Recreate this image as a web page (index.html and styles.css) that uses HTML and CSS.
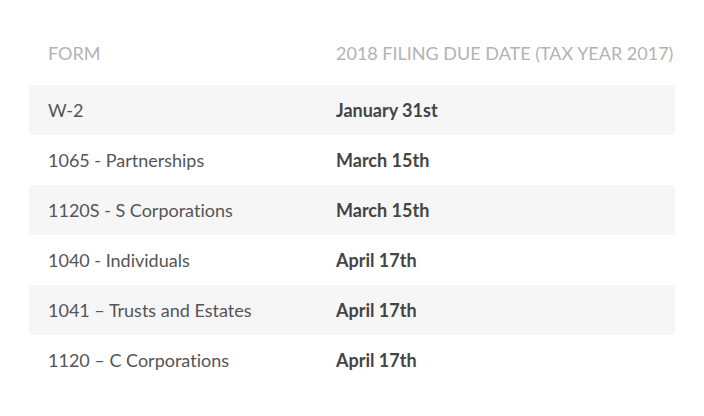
FILE: index.html
```html
<!DOCTYPE html>
<html>
<head>
<meta charset="utf-8">
<link rel="stylesheet" href="styles.css">
</head>
<body>
<div class="table">
  <div class="row head">
    <div class="cell">Form</div>
    <div class="cell">2018 Filing Due Date (Tax Year 2017)</div>
  </div>
  <div class="row alt">
    <div class="cell">W-2</div>
    <div class="cell date">January 31st</div>
  </div>
  <div class="row">
    <div class="cell">1065 - Partnerships</div>
    <div class="cell date">March 15th</div>
  </div>
  <div class="row alt">
    <div class="cell">1120S - S Corporations</div>
    <div class="cell date">March 15th</div>
  </div>
  <div class="row">
    <div class="cell">1040 - Individuals</div>
    <div class="cell date">April 17th</div>
  </div>
  <div class="row alt">
    <div class="cell">1041 – Trusts and Estates</div>
    <div class="cell date">April 17th</div>
  </div>
  <div class="row">
    <div class="cell">1120 – C Corporations</div>
    <div class="cell date">April 17th</div>
  </div>
</div>
</body>
</html>
```
FILE: styles.css
```css
html, body {
  margin: 0;
  padding: 0;
  background: #ffffff;
}
body {
  font-family: Lato, "Open Sans", sans-serif;
  font-size: 18px;
  color: #555555;
  font-variant-ligatures: none;
}
.table {
  margin: 35px 29px 0 29px;
  display: flex;
  flex-direction: column;
}
.row {
  display: grid;
  grid-template-columns: 288px 1fr;
  height: 50px;
  align-items: center;
  border-radius: 4px;
}
.row.head {
  height: 50px;
  align-items: start;
  padding-top: 7px;
  box-sizing: border-box;
  color: #b3b3b3;
  text-transform: uppercase;
}
.row.alt {
  background: #f6f6f6;
}
.cell {
  padding-left: 19px;
  white-space: nowrap;
}
.date {
  font-weight: 700;
  color: #444444;
}
```
